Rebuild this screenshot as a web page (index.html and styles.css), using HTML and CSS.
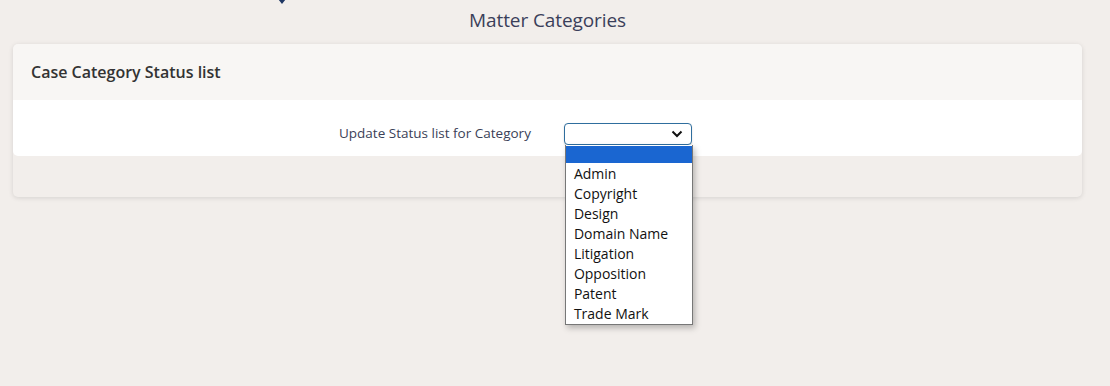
FILE: index.html
```html
<!DOCTYPE html>
<html lang="en">
<head>
    <meta charset="UTF-8">
    <meta name="viewport" content="width=device-width, initial-scale=1.0">
    <title>Matter Categories</title>
    <link rel="stylesheet" href="styles.css">
</head>
<body>
    <div class="top-bar">
        <svg class="top-chevron" width="12" height="8" viewBox="0 0 12 8">
            <path d="M2 -3 L6 2 L10 -3" fill="none" stroke="#1f3763" stroke-width="2.4"/>
        </svg>
    </div>
    <h1 class="page-title">Matter Categories</h1>

    <div class="card">
        <div class="card-header">Case Category Status list</div>
        <div class="card-body">
            <div class="form-row">
                <label class="form-label" for="category">Update Status list for Category</label>
                <div class="select-wrap">
                    <div class="select-box" id="category">
                        <svg class="select-arrow" width="12" height="8" viewBox="0 0 12 8">
                            <path d="M1.5 1.5 L6 6 L10.5 1.5" fill="none" stroke="#111" stroke-width="2"/>
                        </svg>
                    </div>
                    <ul class="select-list">
                        <li class="selected">&nbsp;</li>
                        <li>Admin</li>
                        <li>Copyright</li>
                        <li>Design</li>
                        <li>Domain Name</li>
                        <li>Litigation</li>
                        <li>Opposition</li>
                        <li>Patent</li>
                        <li>Trade Mark</li>
                    </ul>
                </div>
            </div>
        </div>
        <div class="card-footer"></div>
    </div>
</body>
</html>
```

FILE: styles.css
```css
html, body {
    height: 100%;
}

body {
    font-family: "Open Sans", "Liberation Sans", Arial, sans-serif;
    margin: 0;
    padding: 0;
    background-color: #f2eeeb;
    color: #333;
}

.top-bar {
    height: 4px;
    position: relative;
}

.top-chevron {
    position: absolute;
    left: 276px;
    top: 0;
}

.page-title {
    margin: 0 28px 0 13px;
    height: 40px;
    text-align: center;
    font-size: 19px;
    font-weight: 400;
    line-height: 32px;
    color: #3b3f5a;
    letter-spacing: -0.1px;
}

.card {
    margin: 0 28px 0 13px;
    border-radius: 5px;
    background-color: #f2eeeb;
    box-shadow: 0 1px 5px rgba(0, 0, 0, 0.12);
}

.card-header {
    height: 56px;
    padding: 0 18px;
    display: flex;
    align-items: center;
    font-size: 16px;
    font-weight: 600;
    color: #333;
    background-color: #f8f6f4;
    border-radius: 5px 5px 0 0;
}

.card-body {
    height: 56px;
    background-color: #fff;
    border-radius: 0 0 5px 5px;
    box-sizing: border-box;
    padding-top: 23px;
}

.form-row {
    display: flex;
    align-items: center;
    gap: 33px;
    padding-left: 326px;
}

.form-label {
    font-size: 13.5px;
    color: #3b3f58;
    text-align: right;
    padding-bottom: 3px;
}

.select-wrap {
    position: relative;
}

.select-box {
    width: 118px;
    height: 20px;
    padding-right: 8px;
    border: 1px solid #2f6e9e;
    border-radius: 4px;
    background-color: #fff;
    box-shadow: 0 1px 2px rgba(0, 0, 0, 0.15);
    display: flex;
    align-items: center;
    justify-content: flex-end;
}

.select-list {
    position: absolute;
    left: 1px;
    top: 22px;
    width: 126px;
    margin: 0;
    padding: 1px 0 1px 0;
    list-style: none;
    background-color: #fff;
    border: 1px solid #777;
    border-top: none;
    box-shadow: 2px 3px 6px rgba(0, 0, 0, 0.25);
    z-index: 10;
}

.select-list li {
    height: 20px;
    line-height: 22px;
    padding-left: 8px;
    font-size: 14px;
    color: #111;
}

.select-list li.selected {
    height: 17px;
    background-color: #1a66d1;
}

.card-footer {
    height: 41px;
}
```
